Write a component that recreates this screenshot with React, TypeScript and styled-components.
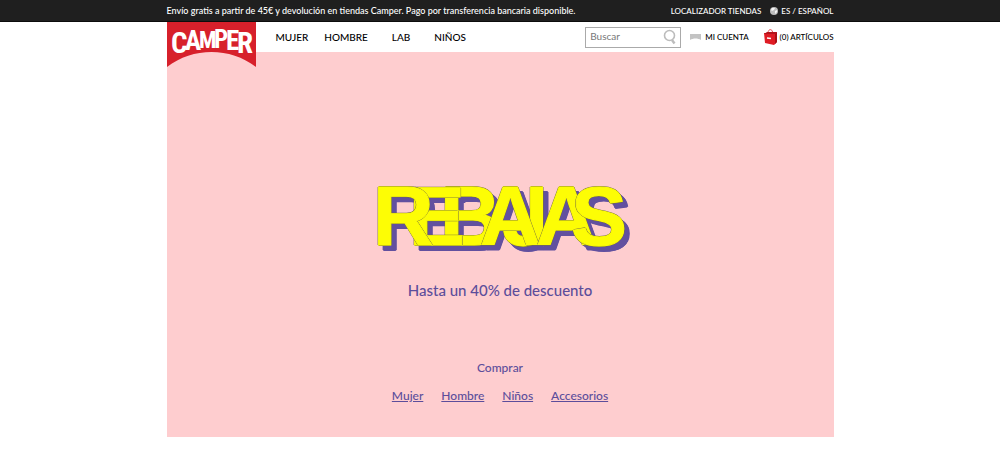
import React from "react";
import styled, { createGlobalStyle } from "styled-components";

const GlobalStyle = createGlobalStyle`
  * { box-sizing: border-box; }
  body {
    margin: 0;
    background: #fff;
    color: #000;
    font-family: Lato, "Liberation Sans", sans-serif;
  }
`;

const Wrap = styled.div`
  width: 66.7%;
  min-width: 660px;
  margin: 0 auto;
`;

const TopBar = styled.div`
  background: #1f1f1f;
  border-bottom: 1px solid #0c0c0c;
  color: #fff;
`;

const TopRow = styled(Wrap)`
  display: flex;
  align-items: center;
  height: 21px;
`;

const Notice = styled.p`
  margin: 0 auto 0 0;
  font-size: 9px;
  font-weight: 500;
  line-height: 20px;
`;

const SmallLink = styled.a<{ $gap?: number; $inner?: number }>`
  display: flex;
  align-items: center;
  gap: ${(p) => p.$inner ?? 3}px;
  margin-left: ${(p) => p.$gap ?? 0}px;
  color: inherit;
  font-size: 8px;
  font-weight: 500;
  line-height: 20px;
  white-space: nowrap;
  text-decoration: none;
`;

const Header = styled(Wrap)`
  display: flex;
  align-items: flex-start;
  height: 30px;
`;

const LogoLink = styled.a`
  position: relative;
  z-index: 2;
  flex: none;
  width: 89px;
  height: 30px;
  svg { display: block; overflow: visible; }
`;

const Nav = styled.nav`
  display: flex;
  margin: 0 auto 0 0;
`;

const NavLink = styled.a<{ $gap: number }>`
  margin-left: ${(p) => p.$gap}px;
  color: #000;
  font-size: 10px;
  font-weight: 500;
  line-height: 30px;
  text-decoration: none;
`;

const Tools = styled.div`
  display: flex;
  align-items: center;
  height: 30px;
`;

const Search = styled.form`
  display: flex;
  align-items: center;
  width: 96px;
  height: 21px;
  border: 1px solid #aaa;
  background: #fff;
`;

const SearchInput = styled.input`
  flex: 1;
  min-width: 0;
  padding: 0 0 2px 4px;
  border: 0;
  outline: 0;
  background: transparent;
  font: 10px Lato, sans-serif;
  &::placeholder { color: #777; opacity: 1; }
`;

const SearchButton = styled.button`
  display: flex;
  padding: 0 3px 0 0;
  border: 0;
  background: none;
`;

const Hero = styled(Wrap)`
  display: flex;
  flex-direction: column;
  align-items: center;
  min-height: 385px;
  padding: 128px 0 30px;
  background: #fecdcf;
  color: #5c4d9b;
`;

const Title = styled.h1`
  display: flex;
  align-items: baseline;
  height: 72px;
  margin: 0;
  color: #fdfd05;
  font-family: "Liberation Sans", Arial, sans-serif;
  font-size: 84px;
  font-weight: 700;
  line-height: 72px;
  filter: drop-shadow(5px 5px 0 #62509f);
`;

const outline = "#77703f";

const Letter = styled.span<{ $pitch: number; $layer: number; $plain?: boolean }>`
  position: relative;
  z-index: ${(p) => p.$layer};
  width: ${(p) => p.$pitch}px;
  font-family: ${(p) => (p.$plain ? "Inter, sans-serif" : "inherit")};
  font-size: ${(p) => (p.$plain ? 80 : 84)}px;
  white-space: nowrap;
  -webkit-text-stroke: 1px #fdfd05;
  text-shadow: 1px 0 ${outline}, -1px 0 ${outline}, 0 1px ${outline}, 0 -1px ${outline};
`;

const Discount = styled.p`
  margin: 26px 0 0;
  font-size: 15px;
  font-weight: 500;
  line-height: 24px;
`;

const Shop = styled.h2`
  margin: 56px 0 0;
  font-size: 12px;
  font-weight: 500;
  line-height: 20px;
`;

const ShopLinks = styled.nav`
  display: flex;
  gap: 18px;
  margin-top: 8px;
`;

const ShopLink = styled.a`
  color: inherit;
  font-size: 12px;
  font-weight: 500;
  line-height: 20px;
`;

const LogoText = styled.text`
  fill: #fff;
  font-family: "Roboto Condensed", "Liberation Sans Narrow", "Liberation Sans", sans-serif;
  font-weight: 700;
`;

const letters = [
  { char: "R", pitch: 36, layer: 4 },
  { char: "E", pitch: 31, layer: 3 },
  { char: "B", pitch: 40, layer: 2 },
  { char: "A", pitch: 21, layer: 4 },
  { char: "J", pitch: 35, layer: 3, plain: true },
  { char: "A", pitch: 35, layer: 5 },
  { char: "S", pitch: 56, layer: 6 },
];

const Logo = () => (
  <svg width="89" height="45" viewBox="0 0 89 45" role="img" aria-label="Camper">
    <path d="M0 0H89V45C63 25 26 25 0 45Z" fill="#d7202b" />
    <LogoText>
      <tspan x="4" y="31" fontSize="29">C</tspan>
      <tspan x="18" y="28" fontSize="27">A</tspan>
      <tspan x="32" y="26" fontSize="23">M</tspan>
      <tspan x="47" y="26" fontSize="25">P</tspan>
      <tspan x="59" y="28" fontSize="27">E</tspan>
      <tspan x="70" y="31" fontSize="29">R</tspan>
    </LogoText>
  </svg>
);

const Globe = () => (
  <svg width="8" height="8" viewBox="0 0 8 8" aria-hidden="true">
    <circle cx="4" cy="4" r="4" fill="#bdbdbd" />
    <path d="M2 1L5 1L4 3L2 4L1 3ZM5 4L7 3L7 5L5 7Z" fill="#f4f4f4" />
  </svg>
);

const SearchIcon = () => (
  <svg width="14" height="16" viewBox="0 0 14 16" fill="none" stroke="#bcbcbc" aria-hidden="true">
    <circle cx="6.5" cy="6.5" r="5" strokeWidth="1.6" />
    <path d="M9 11L11.5 14.5" strokeWidth="2.4" />
  </svg>
);

const AccountIcon = () => (
  <svg width="11" height="6" viewBox="0 0 11 6" aria-hidden="true">
    <path d="M0 0H11V6C8 4 3 4 0 6Z" fill="#c3c3c3" />
  </svg>
);

const BagIcon = () => (
  <svg width="13" height="17" viewBox="0 0 13 17" aria-hidden="true">
    <path d="M4 4C4 0 8 -.5 8.5 3" fill="none" stroke="#e5474d" />
    <path d="M0 4L10 4L13 3V13L10 16L1 14Z" fill="#df1c24" />
    <path d="M11 5L13 3V13L11 15Z" fill="#a90f16" />
    <path d="M0 5L3 3L13 3L11 5Z" fill="#b3141b" />
    <path d="M3 9L7 9.5" stroke="#fff" strokeWidth="1.4" />
  </svg>
);

export default function App() {
  return (
    <>
      <GlobalStyle />
      <TopBar>
        <TopRow>
          <Notice>
            Envío gratis a partir de 45€ y devolución en tiendas Camper. Pago por transferencia bancaria disponible.
          </Notice>
          <SmallLink href="#tiendas">LOCALIZADOR TIENDAS</SmallLink>
          <SmallLink href="#idioma" $gap={9}>
            <Globe />
            ES / ESPAÑOL
          </SmallLink>
        </TopRow>
      </TopBar>
      <Header as="header">
        <LogoLink href="#inicio">
          <Logo />
        </LogoLink>
        <Nav>
          <NavLink href="#mujer" $gap={20}>MUJER</NavLink>
          <NavLink href="#hombre" $gap={16}>HOMBRE</NavLink>
          <NavLink href="#lab" $gap={24}>LAB</NavLink>
          <NavLink href="#ninos" $gap={24}>NIÑOS</NavLink>
        </Nav>
        <Tools>
          <Search>
            <SearchInput type="text" placeholder="Buscar" aria-label="Buscar" />
            <SearchButton type="button" aria-label="Enviar búsqueda">
              <SearchIcon />
            </SearchButton>
          </Search>
          <SmallLink href="#cuenta" $gap={9} $inner={4}>
            <AccountIcon />
            MI CUENTA
          </SmallLink>
          <SmallLink href="#cesta" $gap={15}>
            <BagIcon />
            (0) ARTÍCULOS
          </SmallLink>
        </Tools>
      </Header>
      <Hero as="main">
        <Title>
          {letters.map((l, i) => (
            <Letter key={i} $pitch={l.pitch} $layer={l.layer} $plain={l.plain}>
              {l.char}
            </Letter>
          ))}
        </Title>
        <Discount>Hasta un 40% de descuento</Discount>
        <Shop>Comprar</Shop>
        <ShopLinks>
          <ShopLink href="#c-mujer">Mujer</ShopLink>
          <ShopLink href="#c-hombre">Hombre</ShopLink>
          <ShopLink href="#c-ninos">Niños</ShopLink>
          <ShopLink href="#c-accesorios">Accesorios</ShopLink>
        </ShopLinks>
      </Hero>
    </>
  );
}
